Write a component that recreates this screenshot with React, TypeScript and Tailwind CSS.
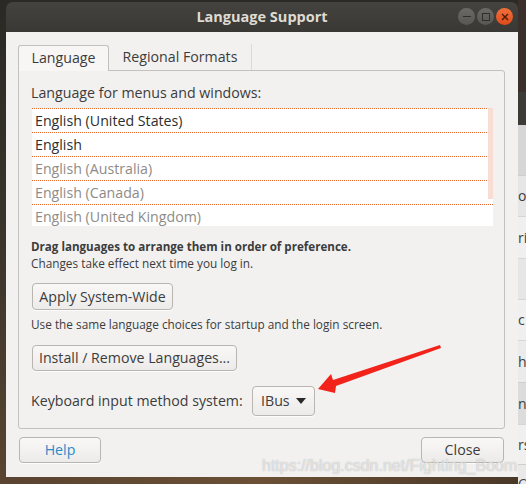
import React from "react";

const FONT = { fontFamily: '"Open Sans", "Noto Sans", sans-serif' };

function Btn({ children, className = "" }: { children: React.ReactNode; className?: string }) {
  return (
    <div
      className={
        "flex items-center justify-center rounded-[4px] border border-[#b9b5b0] bg-gradient-to-b from-[#f9f8f7] to-[#ecebe9] shadow-[0_1px_0_rgba(255,255,255,0.8)] whitespace-nowrap " +
        className
      }
    >
      {children}
    </div>
  );
}

const rows = [
  { t: "English (United States)", dim: false },
  { t: "English", dim: false },
  { t: "English (Australia)", dim: true },
  { t: "English (Canada)", dim: true },
  { t: "English (United Kingdom)", dim: true },
];

export default function App() {
  return (
    <div className="relative w-[526px] h-[484px] overflow-hidden flex bg-[#2e2a25]" style={FONT}>
      {/* left desktop strip */}
      <div className="w-[6px] h-full bg-gradient-to-b from-[#2b2925] via-[#3a342b] to-[#5a4530]" />

      {/* window column */}
      <div className="w-[512px] h-full flex flex-col">
        <div className="h-[2px] bg-[#2d2a26]" />
        {/* title bar */}
        <div className="h-[30px] rounded-t-[7px] bg-gradient-to-b from-[#444340] to-[#393834] flex items-center relative">
          <div className="flex-1 text-center text-[14.5px] font-bold text-[#dfdbd2]">
            Language Support
          </div>
          <div className="absolute right-[5px] top-[6px] flex gap-[2px]">
            <div className="w-[17px] h-[17px] rounded-full bg-gradient-to-b from-[#6b6a66] to-[#575652] flex items-center justify-center">
              <div className="w-[8px] h-[1px] bg-[#2f2e2b]" />
            </div>
            <div className="w-[17px] h-[17px] rounded-full bg-gradient-to-b from-[#6b6a66] to-[#575652] flex items-center justify-center">
              <div className="w-[8px] h-[8px] border border-[#2f2e2b]" />
            </div>
            <div className="w-[17px] h-[17px] rounded-full bg-gradient-to-b from-[#f0703c] to-[#df4a16] flex items-center justify-center">
              <svg width="8" height="8" viewBox="0 0 8 8">
                <path d="M1 1L7 7M7 1L1 7" stroke="#4a1a08" strokeWidth="1.4" />
              </svg>
            </div>
          </div>
        </div>

        {/* window body */}
        <div className="h-[445px] bg-[#f2f1f0] pt-[12px] pl-[12px] pr-[13px] flex flex-col">
          {/* tabs */}
          <div className="flex h-[26px] items-end">
            <div className="w-[91px] h-[26px] rounded-t-[3px] border border-b-0 border-[#c4c0bb] bg-[#f7f6f5] flex items-center justify-center text-[14.2px] text-[#3c3c3c] relative z-10 -mb-[1px] pb-[1px]">
              Language
            </div>
            <div className="w-[143px] h-[26px] flex items-center justify-center text-[14.2px] text-[#3c3c3c] border-r border-[#dcd9d6]">
              Regional Formats
            </div>
          </div>
          {/* frame */}
          <div className="h-[359px] border border-[#c4c0bb] rounded-[3px] rounded-tl-none bg-[#f2f1f0] pt-[12px] pl-[12px] pr-[11px] flex flex-col">
            <div className="h-[20px] flex items-center text-[14.2px] text-[#3c3c3c] whitespace-nowrap">
              Language for menus and windows:
            </div>
            <div className="mt-[5px] ml-[1px] h-[118px] bg-white overflow-hidden relative">
              {rows.map((r) => (
                <div
                  key={r.t}
                  className={
                    "h-[24px] border-t border-dotted border-[#e9692c] flex items-center pl-[3px] text-[14.2px] whitespace-nowrap " +
                    (r.dim ? "text-[#8e8b87]" : "text-[#2e2e2e]")
                  }
                >
                  {r.t}
                </div>
              ))}
              <div className="absolute right-0 top-0 w-[5px] h-[91px] bg-[#f9dcd2]" />
            </div>
            <div className="mt-[13px] text-[11.6px] leading-[16px] font-bold text-[#3c3c3c] whitespace-nowrap">
              Drag languages to arrange them in order of preference.
            </div>
            <div className="text-[11.8px] leading-[16px] text-[#3c3c3c] whitespace-nowrap">
              Changes take effect next time you log in.
            </div>
            <Btn className="mt-[12px] ml-[1px] w-[141px] h-[27px] text-[14.2px] text-[#3c3c3c]">Apply System-Wide</Btn>
            <div className="mt-[6px] text-[11.8px] leading-[16px] text-[#3c3c3c] whitespace-nowrap">
              Use the same language choices for startup and the login screen.
            </div>
            <Btn className="mt-[13px] ml-[1px] w-[205px] h-[26px] text-[14.2px] text-[#3c3c3c]">Install / Remove Languages...</Btn>
            <div className="mt-[15px] flex items-center h-[30px]">
              <div className="w-[221px] text-[14.2px] text-[#3c3c3c] whitespace-nowrap">Keyboard input method system:</div>
              <Btn className="w-[63px] h-[30px] !justify-between pl-[8px] pr-[8px] text-[14.2px] text-[#3c3c3c]">
                <span>IBus</span>
                <svg width="10" height="6" viewBox="0 0 10 6">
                  <path d="M0 0H10L5 6Z" fill="#2a2a2a" />
                </svg>
              </Btn>
            </div>
          </div>
          {/* bottom buttons */}
          <div className="mt-[8px] flex justify-between pl-[1px] pr-[1px]">
            <Btn className="w-[82px] h-[26px] text-[14.2px] text-[#2a8bc8]">Help</Btn>
            <Btn className="w-[83px] h-[26px] text-[14.2px] text-[#3c3c3c]">Close</Btn>
          </div>
        </div>
        {/* desktop below */}
        <div className="flex-1 bg-gradient-to-r from-[#5a4330] via-[#6b5035] to-[#4a3828]" />
      </div>

      {/* right strip: another window */}
      <div className="w-[8px] h-full flex flex-col overflow-hidden text-[14px] text-[#3c3c3c] leading-none">
        <div className="h-[92px] shrink-0 bg-[#3a2f2a]" />
        <div className="h-[33px] shrink-0 bg-[#3c3b37]" />
        <div className="h-[50px] shrink-0 bg-[#d6d6d6]" />
        <div className="h-[41px] shrink-0 bg-[#e6e6e6] flex items-center border-t border-[#cfcfcf] whitespace-nowrap">oc</div>
        <div className="h-[42px] shrink-0 bg-[#f0f0f0] flex items-center border-t border-[#d6d6d6] whitespace-nowrap">ri</div>
        <div className="h-[41px] shrink-0 bg-[#e6e6e6] border-t border-[#d6d6d6]" />
        <div className="h-[41px] shrink-0 bg-[#f0f0f0] flex items-center border-t border-[#d6d6d6] whitespace-nowrap">c</div>
        <div className="h-[42px] shrink-0 bg-[#ebebeb] flex items-center border-t border-[#d6d6d6] whitespace-nowrap">h</div>
        <div className="h-[42px] shrink-0 bg-[#dcdcdc] flex items-center border-t border-[#cfcfcf] whitespace-nowrap">n</div>
        <div className="h-[40px] shrink-0 bg-[#f0f0f0] flex items-center border-t border-[#d6d6d6] whitespace-nowrap">rs</div>
        <div className="flex-1 bg-[#e9e9e9] border-t border-[#cfcfcf] whitespace-nowrap pt-[12px]">Online</div>
      </div>

      {/* red annotation arrow */}
      <svg className="absolute left-0 top-0 pointer-events-none" width="526" height="484" viewBox="0 0 526 484">
        <path d="M318 389 L331 374 L333 380 L440 345 L441 348 L336 386 L335 393 Z" fill="#f2231b" />
      </svg>

      {/* watermark */}
      <div
        className="absolute left-[262px] top-[454px] text-[16px] text-[rgba(255,255,255,0.65)] whitespace-nowrap pointer-events-none"
        style={{ fontFamily: '"Liberation Sans", Arial, sans-serif', textShadow: "0 0 1px rgba(90,90,90,0.5)" }}
      >
        https://blog.csdn.net/Fighting_Boom
      </div>
    </div>
  );
}
